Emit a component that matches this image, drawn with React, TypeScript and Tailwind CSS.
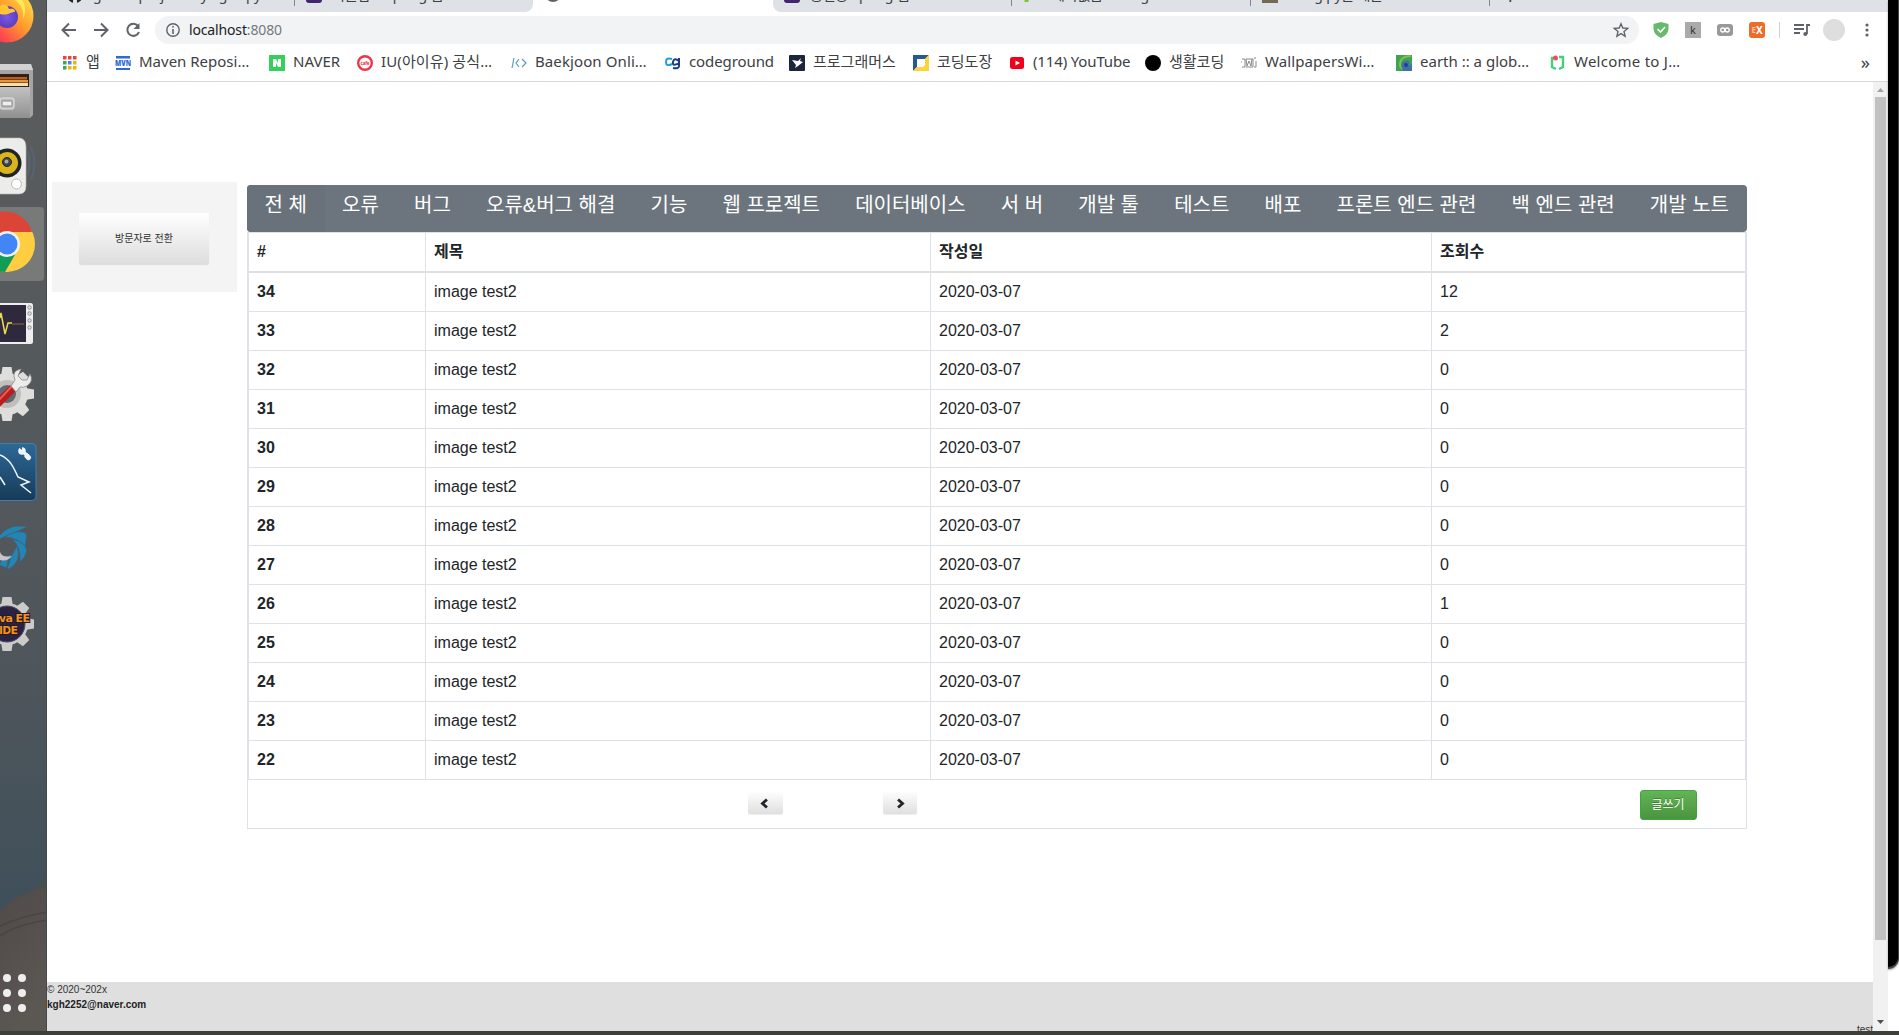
import React from 'react';

const UI = "font-['Noto_Sans','Noto_Sans_CJK_KR',sans-serif]";

const categories = ['전 체', '오류', '버그', '오류&버그 해결', '기능', '웹 프로젝트', '데이터베이스', '서 버', '개발 툴', '테스트', '배포', '프론트 엔드 관련', '백 엔드 관련', '개발 노트'];
const views: Record<number, string> = { 34: '12', 33: '2', 26: '1' };
const rows = Array.from({ length: 13 }, (_, i) => 34 - i);

function Gear({ cy, fill }: { cy: number; fill: string }) {
  return (
    <g transform={`translate(7 ${cy})`} fill={fill}>
      <circle r="21" />
      {[0, 45, 90, 135, 180, 225, 270, 315].map((a) => (
        <path key={a} d="M-6 -18L-4.5 -27H4.5L6 -18Z" transform={`rotate(${a})`} />
      ))}
    </g>
  );
}

function Launcher() {
  return (
    <aside className="flex h-[1031px] w-[47px] shrink-0 flex-col overflow-hidden border-r border-[#454b4d] bg-linear-to-b from-[#5b5d5d] via-[#4f565b] via-65% to-[#3e4f5a] to-90%">
      <svg className="h-[50px] w-[47px] shrink-0" viewBox="0 0 47 50">
        <defs>
          <linearGradient id="fx" x1="1" y1="0" x2="0" y2="1"><stop offset=".1" stopColor="#ffe04a" /><stop offset=".45" stopColor="#ff9a2c" /><stop offset=".75" stopColor="#ff4550" /><stop offset="1" stopColor="#e9108c" /></linearGradient>
          <radialGradient id="fp"><stop offset="0" stopColor="#7d58e8" /><stop offset="1" stopColor="#5a3ec0" /></radialGradient>
        </defs>
        <circle cx="7" cy="16" r="26.500" fill="url(#fx)" />
        <circle cx="7" cy="17" r="11" fill="url(#fp)" />
        <path d="M0 6C4 3 8 5 9 9C14 8 15 10 15 12C10 12 8 16 0 14Z" fill="#ffc533" />
        <path d="M15 0C22 5 24 11 23 19C26 13 25 7 24 3L22 0Z" fill="#ffe85a" />
      </svg>
      <svg className="h-[75px] w-[47px] shrink-0" viewBox="0 50 47 75">
        <defs><linearGradient id="fl" x1="0" y1="0" x2="0" y2="1"><stop stopColor="#c2c2c2" /><stop offset="1" stopColor="#909090" /></linearGradient></defs>
        <path d="M0 64H31L33 70V115L30 118H0Z" fill="#a5a5a5" />
        <path d="M0 64H31L33 70H0Z" fill="#d2d2d2" />
        <path d="M0 74H29V90H0Z" fill="#302018" />
        <path d="M0 77H27V79.500H0Z" fill="#bd5d20" /><path d="M0 80H28V82.500H0Z" fill="#e6953f" /><path d="M0 83H28V86H0Z" fill="#f8deac" />
        <path d="M0 87H30V118H0Z" fill="url(#fl)" />
        <rect x="0" y="98" width="14" height="11" rx="2" fill="#bbb" stroke="#e5e5e5" /><rect x="2" y="101" width="10" height="5" rx="1" fill="#eee" stroke="#888" />
      </svg>
      <svg className="h-[80px] w-[47px] shrink-0" viewBox="0 125 47 80">
        <path d="M-4 138H20Q26 139 26 147V186Q26 194 19 194H-4Z" fill="#ececea" stroke="#bbb" strokeWidth=".6" />
        <circle cx="7" cy="163" r="14.500" fill="#1f2426" /><circle cx="7" cy="163" r="11" fill="#d9b41c" /><circle cx="7" cy="162" r="4.500" fill="#444" stroke="#222" /><circle cx="6.500" cy="161.500" r="2" fill="#aaa" />
        <circle cx="16.500" cy="184" r="5" fill="#fff" stroke="#bbb" />
        <path d="M27 151Q32 163 27 176M31 147Q38 163 31 180" fill="none" stroke="#547290" strokeWidth="2" opacity=".4" />
      </svg>
      <svg className="h-[78px] w-[47px] shrink-0" viewBox="0 205 47 78">
        <rect x="-6" y="207" width="50" height="74" rx="4" fill="#777a79" />
        <circle cx="7" cy="244" r="28" fill="#ffcd40" />
        <path d="M-22 232A28 28 0 0 1 32 232H7L-4 240Z" fill="#db4437" />
        <path d="M-22 232L-3 250L16 253L5 272C-15 272 -26 250 -22 232Z" fill="#0f9d58" />
        <circle cx="7" cy="244" r="13" fill="#f1f1f1" /><circle cx="7" cy="244" r="10.500" fill="#4285f4" />
      </svg>
      <svg className="h-[72px] w-[47px] shrink-0" viewBox="0 283 47 72">
        <rect x="-5" y="303" width="38" height="41" rx="2.500" fill="#eee" /><rect x="-5" y="305" width="31" height="37" fill="#2e293c" />
        <path d="M0 318L1 313L5 334L8 323H12" fill="none" stroke="#eadb58" strokeWidth="1.500" /><path d="M12 324H24" stroke="#8e6935" />
        {[307, 313, 320, 327].map((y) => <circle key={y} cx="29.500" cy={y + 0.5} r="1.800" fill="#ddd" stroke="#777" strokeWidth=".7" />)}
      </svg>
      <svg className="h-[75px] w-[47px] shrink-0" viewBox="0 355 47 75">
        <Gear cy={394} fill="#dededc" /><circle cx="7" cy="394" r="14" fill="#bfbfbd" /><circle cx="7" cy="394" r="9" fill="#62686b" />
        <path d="M-3 404L13 388" stroke="#b91d1d" strokeWidth="8" /><path d="M-2 401L12 386" stroke="#ed5c58" strokeWidth="2" />
        <path d="M11 386L15 380Q11 371 21 369L18 376L22 380L27 380L30 374Q34 381 27 386Q23 388 20 387L16 392Z" fill="#ececec" stroke="#888" strokeWidth=".8" />
      </svg>
      <svg className="h-[82px] w-[47px] shrink-0" viewBox="0 430 47 82">
        <defs><linearGradient id="wb" x1="0" y1="0" x2="0" y2="1"><stop stopColor="#2d6898" /><stop offset="1" stopColor="#173b57" /></linearGradient></defs>
        <rect x="-5" y="443.500" width="41" height="57" rx="4" fill="url(#wb)" stroke="#3d80ad" />
        <path d="M0 455C10 459 14 468 18 477L29 482L21 485L31 493M0 477L5 485" fill="none" stroke="#edf7fc" strokeWidth="1.500" />
        <path d="M22 451L28 456" stroke="#edf7fc" strokeWidth="3.500" /><circle cx="22" cy="451" r="3.800" fill="#edf7fc" /><path d="M17 446L22 450L22 445Z" fill="#2d6898" /><rect x="26" y="453" width="7" height="5" rx="2" transform="rotate(45 27 454)" fill="#edf7fc" />
      </svg>
      <svg className="h-[68px] w-[47px] shrink-0" viewBox="0 512 47 68">
        <g fill="#2385b5" stroke="#50585d" strokeWidth=".7"><path d="M-5 542Q6 522 28 527Q18 530 12 535Q3 536 -5 542Z" /><path d="M4 537Q19 528 27 534Q26 542 25 547Q17 537 4 537Z" /><path d="M12 539Q26 542 27 551Q25 558 20 562Q21 547 12 539Z" /><path d="M17 546Q23 562 7 570Q9 558 17 546Z" /><path d="M12 554Q7 560 7 568L-1 565Q1 558 12 554Z" /></g>
        <path d="M0 552Q2 558 12 556Q7 562 0 560Z" fill="#c7c4ce" />
      </svg>
      <svg className="h-[85px] w-[47px] shrink-0" viewBox="0 580 47 85">
        <Gear cy={624} fill="#cbcbc9" /><circle cx="7" cy="624" r="18" fill="#2b2141" stroke="#554b68" />
        <g fill="#f4921f" stroke="#251d23" strokeWidth="2" paintOrder="stroke" className="font-['DejaVu_Sans'] text-[11px] font-bold"><text x="-1" y="621.500" textLength="31">va EE</text><text x="-1" y="633.500" textLength="19">IDE</text></g>
      </svg>
      <div className="grow" />
      <svg className="h-[156px] w-[47px] shrink-0" viewBox="0 875 47 156">
        <defs><linearGradient id="rock" x1="0" y1="0" x2=".4" y2="1"><stop stopColor="#4f4948" /><stop offset="1" stopColor="#5b5753" /></linearGradient></defs>
        <path d="M0 910L15 898Q27 894 34 890L47 876V1031H0Z" fill="url(#rock)" /><path d="M36 889L47 876V888Z" fill="#46504e" />
        <path d="M0 926Q22 916 47 912M0 936Q15 925 47 920" stroke="#403b39" strokeWidth="1.500" fill="none" opacity=".5" />
        {[978, 993, 1008].map((y) => <g key={y} fill="#eee"><circle cx="7" cy={y} r="4" /><circle cx="22" cy={y} r="4" /></g>)}
      </svg>
    </aside>
  );
}

const ic = 'size-4 shrink-0';
const bookmarks: { w: string; label: string; font: string; icon: React.ReactNode }[] = [
  { w: 'w-[53px]', label: '앱', font: '', icon: <svg className={ic} viewBox="0 0 16 16">{['#e8453c', '#e8453c', '#e8453c', '#3aa757', '#4285f4', '#f4b400', '#3aa757', '#f4b400', '#f4b400'].map((c, i) => <rect key={i} x={(i % 3) * 5 + 1} y={Math.floor(i / 3) * 5 + 1} width="3.500" height="3.500" fill={c} />)}</svg> },
  { w: 'w-[154px]', label: 'Maven Reposi…', font: '', icon: <svg className={ic} viewBox="0 0 16 16"><path d="M1 1H15V3.500H1ZM1 13H15V15H1Z" fill="#2b6bd4" /><text x="0" y="11" textLength="16" lengthAdjust="spacingAndGlyphs" fontSize="8" fontWeight="900" fill="#2b6bd4">MVN</text></svg> },
  { w: 'w-[88px]', label: 'NAVER', font: '', icon: <svg className={ic} viewBox="0 0 16 16"><path d="M0 0H16V16H0Z" fill="#35cf5b" /><path d="M4 12V4H7L9 8V4H12V12H9L7 8V12Z" fill="#fff" /></svg> },
  { w: 'w-[154px]', label: 'IU(아이유) 공식…', font: 'tracking-[0.12px]', icon: <svg className={ic} viewBox="0 0 16 16"><circle cx="8" cy="8" r="6.800" fill="#fff" stroke="#ec3645" strokeWidth="2.400" /><text x="3.500" y="9.500" textLength="9" fontSize="4.500" fontWeight="bold" fill="#e24">cafe</text></svg> },
  { w: 'w-[154px]', label: 'Baekjoon Onli…', font: 'tracking-[0.1px]', icon: <svg className={ic} viewBox="0 0 16 16"><path d="M3 3L1 13M8 4L5 8L8 12M11 4L15 8L11 12" fill="none" stroke="#5999d0" strokeWidth="1.200" /></svg> },
  { w: 'w-[124px]', label: 'codeground', font: 'tracking-[-0.1px]', icon: <svg className={ic} viewBox="0 0 16 16"><path d="M7 4Q1 2 1 7T7 9" fill="none" stroke="#229bd7" strokeWidth="2" /><path d="M14 3V11Q14 14 8 13M14 6Q9 2 8 7T14 8" fill="none" stroke="#193b8c" strokeWidth="2" /></svg> },
  { w: 'w-[124px]', label: '프로그래머스', font: '', icon: <svg className={ic} viewBox="0 0 16 16"><rect width="16" height="16" rx="1" fill="#1b263b" /><path d="M3 5L9 6L12 3L11 6L14 7L9 11L6 13L7 10Z" fill="#fff" /></svg> },
  { w: 'w-[96px]', label: '코딩도장', font: '', icon: <svg className={ic} viewBox="0 0 16 16"><path d="M0 0H16L0 16Z" fill="#245a91" /><path d="M16 0V16H0Z" fill="#ffd43b" /><path d="M4 4H12V10L10 12H4Z" fill="#fff" /></svg> },
  { w: 'w-[136px]', label: '(114) YouTube', font: 'tracking-[-0.15px]', icon: <svg className={ic} viewBox="0 0 16 16"><rect x="1" y="2" width="14" height="12" rx="2.500" fill="#f0021d" /><path d="M6.500 5.500L11 8L6.500 10.500Z" fill="#fff" /></svg> },
  { w: 'w-[96px]', label: '생활코딩', font: '', icon: <svg className={ic} viewBox="0 0 16 16"><circle cx="8" cy="8" r="8" /></svg> },
  { w: 'w-[155px]', label: 'WallpapersWi…', font: 'tracking-[0.1px]', icon: <svg className={ic} viewBox="0 0 16 16"><path d="M1 4H4V12H1M5 4L6 11L8 6L10 11L11 4M5 4H12V12H5M13 3H15M15 6V12H13M0 6V8" fill="none" stroke="#888" strokeWidth="1" /></svg> },
  { w: 'w-[154px]', label: 'earth :: a glob…', font: '', icon: <svg className={ic} viewBox="0 0 16 16"><path d="M0 0H16V16H0Z" fill="#42a154" /><path d="M15 1Q5 1 4 8T12 14" fill="none" stroke="#7ac54c" strokeWidth="2" /><path d="M7 16Q3 8 9 6T13 11L16 9V16Z" fill="#3e70a9" /><circle cx="10" cy="10" r="2" fill="#283a94" /></svg> },
  { w: 'w-[154px]', label: 'Welcome to J…', font: 'tracking-[0.25px]', icon: <svg className={ic} viewBox="0 0 16 16"><path d="M5 3H2V12L6 14M9 2H13V12L9 14" fill="none" stroke="#42cf81" strokeWidth="2.400" /><circle cx="5.500" cy="3" r="2.500" fill="#ef4d62" /></svg> },
];

function Tab({ w, left, children, icon }: { w: string; left: string; children: React.ReactNode; icon: React.ReactNode }) {
  return <div className={`flex h-3 shrink-0 overflow-hidden ${w} ${left}`}>{icon}<span className="-mt-[15px] ml-[10px] text-[14px] leading-5 tracking-[-0.2px] whitespace-pre text-[#3c4043]">{children}</span></div>;
}
const Purple = <i className="-mt-[13px] block size-4 shrink-0 rounded-[3px] bg-[#44256d]" />;
const Sep = <i className="block h-[6px] w-px shrink-0 bg-[#80868b]" />;

function Chrome() {
  return (
    <header className={`${UI} h-[82px] shrink-0 overflow-hidden border-b border-[#d6d8da] bg-white`}>
      <div className="flex h-3 overflow-hidden bg-white">
        <div className="flex w-[486px] shrink-0 overflow-hidden rounded-br-lg bg-[#dee1e6]">
          <Tab w="w-[247px]" left="pl-[20px]" icon={<svg className="-mt-[13px] size-4 shrink-0" viewBox="0 0 16 16"><circle cx="8" cy="8" r="8" fill="#222" /><path d="M6 11H10V16H6Z" fill="#dee1e6" /></svg>}>{'github project/my ego · py'}</Tab>{Sep}
          <Tab w="w-[230px]" left="pl-[11px]" icon={Purple}>이클립스 spring 웹</Tab>
        </div>
        <div className="w-[240px] shrink-0 pl-[12px]"><i className="-mt-[14px] block size-4 rounded-full bg-[#5f6368]" /></div>
        <div className="flex grow overflow-hidden rounded-bl-lg bg-[#dee1e6]">
          <Tab w="w-[238px]" left="pl-[11px]" icon={Purple}>홍길동 Spring 웹</Tab>{Sep}
          <Tab w="w-[238px]" left="pl-[14px]" icon={<i className="-mt-[14px] block size-4 shrink-0 -skew-x-12 border-l-4 border-[#7ac530]" />}>제목없음 - Google</Tab>{Sep}
          <Tab w="w-[238px]" left="pl-[11px]" icon={<i className="-mt-[13px] block size-4 shrink-0 bg-[#756857]" />}>velog.py글 새글</Tab>{Sep}
          <span className="-mt-[15px] ml-[14px] text-[22px] leading-5 text-[#3c4043]">+</span>
        </div>
      </div>
      <div className="flex h-9 items-center">
        <svg className="ml-3 h-6 w-[90px] shrink-0" viewBox="0 0 90 24" fill="none" stroke="#5f6368" strokeWidth="2"><path d="M17 12H4M10 5.500L3.500 12L10 18.500M35 12H48M42 5.500L48.500 12L42 18.500" /><path d="M79 8A6 6 0 1 0 80 14" /><path d="M80.500 5V11H74.500Z" fill="#5f6368" stroke="none" /></svg>
        <div className="ml-[6px] flex h-7 w-[1484px] shrink-0 items-center rounded-full bg-[#f1f3f4] pr-[10px] pl-[11px]">
          <svg className="size-[14px]" viewBox="0 0 14 14"><circle cx="7" cy="7" r="6.200" fill="none" stroke="#5f6368" strokeWidth="1.400" /><path d="M6.200 6H7.800V11H6.200ZM6.200 3H7.800V4.600H6.200Z" fill="#5f6368" /></svg>
          <span className="-mt-px ml-[9px] text-[14px] tracking-[-0.15px] text-[#202124]">localhost<span className="text-[#75797d]">:8080</span></span>
          <svg className="ml-auto size-4" viewBox="0 0 24 24" fill="none" stroke="#5f6368" strokeWidth="2"><path d="M12 2.500L14.700 9L22 9.600L16.500 14.200L18.200 21.500L12 17.500L5.800 21.500L7.500 14.200L2 9.600L9.300 9Z" /></svg>
        </div>
        <svg className="ml-[14px] h-4 w-4 shrink-0" viewBox="0 0 16 16"><path d="M8 0L15.500 2V7Q15 13 8 16Q1 13 .5 7V2Z" fill="#68b96c" /><path d="M4.500 7L7.500 10L12 5" fill="none" stroke="#fff" strokeWidth="1.600" /></svg>
        <div className="ml-4 flex size-4 shrink-0 items-center justify-center bg-[#aaa] text-[11px] text-[#333]">k</div>
        <svg className="ml-4 h-3 w-4 shrink-0" viewBox="0 0 16 12"><rect width="16" height="12" rx="3" fill="#999" /><circle cx="5.800" cy="6" r="2" fill="none" stroke="#fff" strokeWidth="1.300" /><circle cx="10.200" cy="6" r="2" fill="none" stroke="#fff" strokeWidth="1.300" /></svg>
        <div className="ml-4 flex size-4 shrink-0 items-center justify-center rounded-[3px] bg-[#eb6d2a] text-[10px] font-bold text-white"><span className="text-[8px] text-[#ffc49f]">E</span>X</div>
        <div className="ml-[14px] h-4 w-px bg-[#d0d3d6]" />
        <svg className="ml-[13px] h-4 w-[18px] shrink-0" viewBox="0 0 18 16" fill="none" stroke="#5f6368" strokeWidth="1.800"><path d="M1 3H11M1 7H11M1 11H7M17 3H14V12" /><circle cx="12.300" cy="12" r="2" fill="#5f6368" stroke="none" /></svg>
        <div className="ml-3 size-[22px] shrink-0 rounded-full bg-[#dedede]" />
        <svg className="ml-5 h-4 w-1" viewBox="0 0 4 16" fill="#5f6368"><circle cx="2" cy="3" r="1.600" /><circle cx="2" cy="8" r="1.600" /><circle cx="2" cy="13" r="1.600" /></svg>
      </div>
      <div className="flex h-[30px] items-center pl-[15px] text-[15px] text-[#3c4043]">
        {bookmarks.map((b) => <div key={b.label} className={`flex shrink-0 items-center gap-2 overflow-hidden whitespace-nowrap ${b.w} ${b.font}`}>{b.icon}<span className="-mt-[2px] pb-[2px] leading-[22px]">{b.label}</span></div>)}
        <span className="-mt-[2px] ml-auto pr-[18px] text-[18px] leading-5">»</span>
      </div>
    </header>
  );
}

const cell = 'flex items-center border-r border-[#dee2e6] px-2';
const grid = 'grid grid-cols-[177px_505px_501px_314px]';

function Board() {
  return (
    <main className="flex h-[900px] grow flex-col overflow-hidden bg-white text-[#212529]">
      <div className="flex grow items-start">
        <div className="mt-[100px] ml-[5px] flex h-[110px] w-[185px] shrink-0 bg-[#f4f4f4] pt-[31px] pl-[27px]">
          <button className="h-[51px] w-[130px] rounded-[2px] border-b border-[#ddd] bg-linear-to-b from-white to-[#dedede] text-[10px] text-[#333] shadow-[0_1px_1px_#ddd]">방문자로 전환</button>
        </div>
        <section className="mt-[103px] ml-[10px] w-[1500px] shrink-0">
          <nav className="flex h-[47px] rounded-[4px] bg-[#6c757d] text-[20px] text-white">
            {categories.map((c, i) => <a key={c} className={`px-[17.580px] pt-[5px] leading-[30px] whitespace-nowrap ${i ? '' : 'rounded-l-[4px] bg-[#69727a]'}`}>{c}</a>)}
          </nav>
          <div className="h-[597px] border border-[#dee2e6]">
            <div className="border-x border-[#dee2e6]">
              <div className={`${grid} h-10 border-b-2 border-[#dedfe0] text-[16px] font-bold`}>
                <div className={cell}>#</div><div className={cell}>제목</div><div className={cell}>작성일</div><div className="flex items-center px-2">조회수</div>
              </div>
              {rows.map((n) => (
                <div key={n} className={`${grid} h-[39px] border-b border-[#dee2e6] text-[16px]`}>
                  <div className={`${cell} font-bold`}>{n}</div><div className={cell}>image test2</div><div className={cell}>2020-03-07</div><div className="flex items-center px-2">{views[n] ?? '0'}</div>
                </div>
              ))}
            </div>
            <div className="flex h-12 items-start">
              {['M12 3L6.500 8L12 13', 'M6 3L11.500 8L6 13'].map((d, i) => (
                <button key={d} className={`mt-[11px] flex h-[23px] items-center justify-center rounded-[2px] bg-linear-to-b from-white to-[#dfdfdf] shadow-[0_1px_1px_#eee] ${i ? 'ml-[100px] w-[34px]' : 'ml-[500px] w-[35px] pr-[2px]'}`}>
                  <svg className="mt-[2px] h-[13px] w-[13px]" viewBox="1 0 16 16" fill="none" stroke="#212529" strokeWidth="3.500"><path d={d} /></svg>
                </button>
              ))}
              <button className="mt-[10px] mr-[49px] ml-auto h-[30px] w-[57px] rounded-[3px] border border-[#40a347] bg-linear-to-b from-[#62b455] to-[#4b9440] pr-px text-[12px] leading-[26px] text-white [text-shadow:0_-1px_0_#397d30]">글쓰기</button>
            </div>
          </div>
        </section>
      </div>
    </main>
  );
}

export default function App() {
  return (
    <div className="h-[1035px] w-[1899px] overflow-hidden bg-white font-['Liberation_Sans','Noto_Sans_CJK_KR',sans-serif]">
      <div className="flex h-[1031px]">
        <Launcher />
        <div className="flex w-[1841px] shrink-0 flex-col">
          <Chrome />
          <div className="flex h-[949px]">
            <div className="flex w-[1826px] flex-col">
              <Board />
              <footer className="flex h-[49px] shrink-0 justify-between overflow-hidden bg-[#dfdfdf] text-[10px] leading-[15px] text-[#333]">
                <div><p>© 2020~202x</p><p className="font-bold text-[#222]">kgh2252@naver.com</p></div>
                <span className="mt-10">test</span>
              </footer>
            </div>
            <div className="flex w-[15px] flex-col items-center bg-[#f1f1f1]">
              <svg className="h-[15px] w-[15px] shrink-0" viewBox="0 0 15 15"><path d="M4 10H11L7.500 6Z" fill="#a3a3a3" /></svg>
              <div className="h-[843px] w-[11px] bg-[#c1c1c1]" />
              <svg className="mt-auto mb-px h-[15px] w-[15px] shrink-0" viewBox="0 0 15 15"><path d="M4 5H11L7.500 9Z" fill="#505050" /></svg>
            </div>
          </div>
        </div>
        <div className="h-[1031px] w-[11px] bg-white">
          <div className="h-[969px] rounded-br-[12px] border-r border-b-2 border-[#444] bg-black shadow-[0_1px_2px_#999]" />
        </div>
      </div>
      <div className="h-1 bg-[#3d3f38]" />
    </div>
  );
}
